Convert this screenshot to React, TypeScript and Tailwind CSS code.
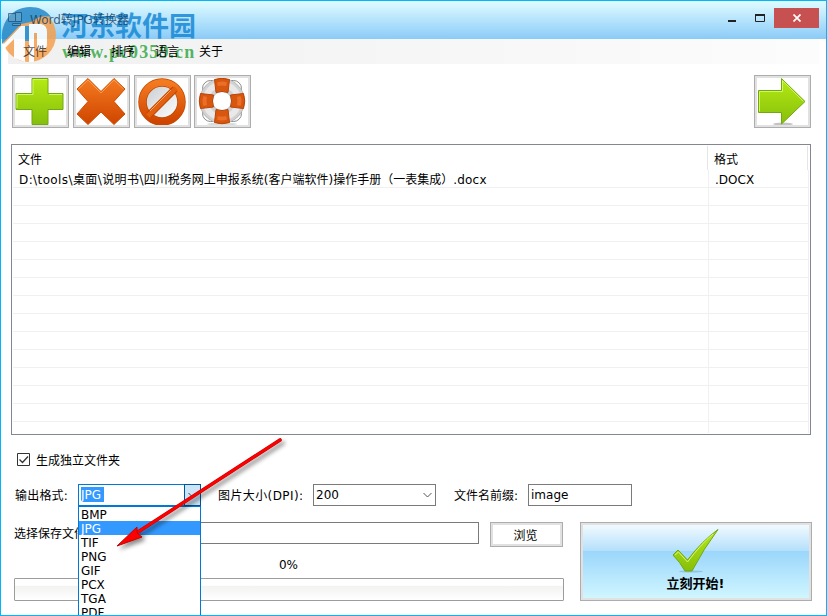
import { clsx } from "clsx";
import type { ReactNode } from "react";

const menus = ["文件", "编辑", "排序", "语言", "关于"];
const formats = ["BMP", "JPG", "TIF", "PNG", "GIF", "PCX", "TGA", "PDF"];
const rows = Array.from({ length: 14 }, (_, i) => i);

function ToolButton({ children }: { children: ReactNode }) {
  return (
    <button className="block h-[53px] w-[57px] shrink-0 border border-[#adadad] bg-[#e1e1e1] p-[2px]">
      <svg viewBox="0 0 51 47" className="block h-[47px] w-[51px] bg-white">
        {children}
      </svg>
    </button>
  );
}

function Gradients() {
  return (
    <svg className="absolute h-0 w-0">
      <defs>
        <linearGradient id="green" x2="0" y2="1">
          <stop stopColor="#b5ea13" />
          <stop offset="1" stopColor="#86bf0c" />
        </linearGradient>
        <linearGradient id="orange" x2="0" y2="1">
          <stop stopColor="#f47a20" />
          <stop offset="1" stopColor="#cf4500" />
        </linearGradient>
        <linearGradient id="silver" x2="1" y2="1">
          <stop stopColor="#c9cdd0" />
          <stop offset="1" stopColor="#ffffff" />
        </linearGradient>
      </defs>
    </svg>
  );
}

function Lifebuoy() {
  return (
    <>
      <ellipse cx="25" cy="46" rx="15" ry="1.500" fill="#ccc" opacity=".7" />
      <rect x="5.500" y="2.500" width="39" height="41" rx="8" fill="white" stroke="#8b8b8b" />
      <circle cx="25" cy="23" r="16" fill="white" stroke="#b5b5b5" strokeWidth="13.500" />
      <circle cx="25" cy="23" r="16" fill="none" stroke="#d2d2d2" strokeWidth="12" />
      <circle cx="25" cy="23" r="16.500" fill="none" stroke="#e9e9e9" strokeWidth="6" />
      {[0, 90, 180, 270].map((angle) => (
        <g key={angle} transform={`rotate(${angle} 25 23)`}>
          <path d="M17.500 1.500Q25-1 32.500 1.500L31 14.500Q25 12.500 19 14.500Z" fill="#d9560f" stroke="#b84507" />
          <path d="M20 4.500Q25 2.500 30 4.500L29 8Q25 7 21 8Z" fill="#ea7029" />
        </g>
      ))}
    </>
  );
}

function Watermark() {
  return (
    <div className="pointer-events-none absolute left-0 top-0 h-[66px] w-[205px]">
      <svg viewBox="0 0 60 66" className="absolute left-0 top-0 h-[66px] w-[60px]">
        <g opacity=".85">
          <circle cx="28" cy="34" r="27" fill="#f5a04e" />
          <path d="M1 38C0 20 12 6 29 6C38 6 45 9 50 16C42 14 36 16 30 21L20 23L1 43Z" fill="#2789c8" />
          <path d="M1 45L20 25H24V61L13 57V38L3 48Z" fill="#fff" />
          <path d="M28 23H40Q46 24 46 31V44Q46 48 40 49H36V32H33V61H28Z" fill="#fff" />
          <path d="M24 25H28V40H24Z" fill="#2789c8" />
        </g>
      </svg>
      <div className="absolute left-[60px] top-[6px] whitespace-nowrap font-['Noto_Sans_CJK_SC',sans-serif] text-[27px] font-bold leading-[36px] text-[#1688d4]/85">
        河东软件园
      </div>
      <div className="absolute left-[61px] top-[41px] whitespace-nowrap font-['Liberation_Serif',serif] text-[18px] font-bold leading-[20px] tracking-[1.1px] text-[#35a947]/85">
        www.pc0359.cn
      </div>
    </div>
  );
}

function TitleBar() {
  return (
    <header className="flex h-[38px] shrink-0 bg-linear-to-b from-[#dffcff] to-[#8bcbf8] px-[7px]">
      <svg viewBox="0 0 16 16" className="relative z-10 mt-[10px] h-4 w-4 opacity-70">
        <path d="M.5 2.500h7v8h-7zM7.500 1.500h6v9h-6zM4.500 12.500h8v2h-8z" fill="#66a7cb" stroke="#1f4a72" />
      </svg>
      <span className="relative z-10 ml-[6px] mt-[9px] text-[12px] leading-[20px] text-[#173c5a]/80">
        Word转JPG转换器
      </span>
      <div className="ml-auto mt-[7px] flex h-[20px]">
        <svg viewBox="0 0 46 20" className="h-[20px] w-[46px]">
          <path d="M0 12h8v2H0z" fill="#222" />
          <path d="M27.500 7.500h9v6h-9z" fill="none" stroke="#222" />
          <path d="M27 6h10v2H27z" fill="#222" />
        </svg>
        <button className="flex h-[20px] w-[45px] items-center justify-center bg-[#c75050]">
          <svg viewBox="0 0 8 8" className="h-[8px] w-[8px]">
            <path d="M.5.5l7 7m0-7l-7 7" stroke="#fff" strokeWidth="1.700" />
          </svg>
        </button>
      </div>
    </header>
  );
}

function FileList() {
  return (
    <div className="ml-[10px] mt-[16px] h-[291px] w-[800px] shrink-0 border border-[#828790] bg-white p-px leading-[18px]">
      <div className="flex h-[24px] w-[795px] border-r border-[#e5e5e5]">
        <span className="h-[24px] w-[695px] border-r border-[#e5e5e5] pl-[5px] pt-[5px]">文件</span>
        <span className="pl-[6px] pt-[5px]">格式</span>
      </div>
      <div className="w-[796px] border-r border-[#f0f0f0]">
        {rows.map((i) => (
          <div key={i} className="flex h-[18px] border-b border-[#f0f0f0] leading-[20px]">
            <span className="w-[696px] whitespace-pre border-r border-[#f0f0f0] pl-[6px]">
              {i === 0 && (
                <>
                  <span className="tracking-[0.4px]">{"D:\\tools\\桌面\\说明书\\"}</span>
                  四川税务网上申报系统(客户端软件)操作手册（一表集成）
                  <span className="tracking-[0.2px]">.docx</span>
                </>
              )}
            </span>
            <span className="pl-[6px]">{i === 0 && ".DOCX"}</span>
          </div>
        ))}
        <div className="h-[11px] w-[696px] border-r border-[#f0f0f0]" />
      </div>
    </div>
  );
}

function FormatSelect() {
  return (
    <div className="relative h-[22px] w-[123px]">
      <div className="flex h-[22px] border border-[#0078d7] bg-white">
        <span className="ml-[2px] mt-[2px] h-[15px] w-[23px] bg-[#3399ff] leading-[16px] text-white">JPG</span>
        <div className="-my-px -mr-px ml-auto flex w-[17px] items-center justify-center border border-[#005499] bg-[#cce4f7]">
          <svg viewBox="0 0 9 6" className="h-[6px] w-[9px]">
            <path d="M.5 1l4 4 4-4" fill="none" stroke="#444" />
          </svg>
        </div>
      </div>
      <ul className="absolute left-0 top-[22px] z-10 h-[110px] w-[123px] overflow-hidden border border-b-0 border-[#0078d7] bg-white">
        {formats.map((format) => (
          <li
            key={format}
            className={clsx("h-[14px] pl-[2px] leading-[16px]", format === "JPG" && "bg-[#3399ff] text-white")}
          >
            {format}
          </li>
        ))}
      </ul>
    </div>
  );
}

function Options() {
  return (
    <div className="flex h-[22px] shrink-0 leading-[24px]">
      <span className="w-[77px] pl-[14px] tracking-[0.2px]">输出格式:</span>
      <FormatSelect />
      <span className="ml-[17px] w-[95px] whitespace-nowrap tracking-[0.4px]">图片大小(DPI):</span>
      <div className="flex h-[22px] w-[123px] items-center border border-[#7a7a7a] pl-[2px] pr-[3px]">
        200
        <svg viewBox="0 0 9 6" className="ml-auto h-[6px] w-[9px]">
          <path d="M.5 1l4 4 4-4" fill="none" stroke="#555" />
        </svg>
      </div>
      <span className="ml-[18px] w-[74px] whitespace-nowrap">文件名前缀:</span>
      <div className="h-[22px] w-[104px] border border-[#7a7a7a] pl-[2px] leading-[21px]">image</div>
    </div>
  );
}

function Output() {
  return (
    <div className="mt-[16px] flex h-[79px] shrink-0">
      <div className="w-[579px] pl-[13px]">
        <div className="flex">
          <span className="w-[90px] whitespace-nowrap leading-[24px]">选择保存文件夹:</span>
          <div className="h-[22px] w-[375px] border border-[#7a7a7a]" />
          <button className="ml-[11px] h-[25px] w-[73px] border border-[#adadad] bg-[#e1e1e1] p-[2px]">
            <span className="block h-full bg-white pr-[2px] leading-[22px]">浏览</span>
          </button>
        </div>
        <div className="mt-[9px] w-[549px] text-center leading-[18px]">0%</div>
        <div className="mt-[4px] h-[23px] w-[550px] rounded-[1px] border border-[#9c9c9c] bg-linear-to-b from-white from-30% via-[#f3f3f2] via-35% to-white" />
      </div>
      <button className="h-[79px] w-[232px] border border-[#adadad] bg-[#e1e1e1] p-[2px]">
        <div className="flex h-full flex-col items-center bg-[linear-gradient(#f1faff_0%,#b5e0fb_35%,#9bd6fb_36%,#d0f6ff_100%)]">
          <svg viewBox="0 0 48 45" className="mt-[3px] h-[45px] w-[48px] shrink-0">
            <ellipse cx="19" cy="43.500" rx="12" ry="1" fill="#67a8ca" opacity=".5" />
            <path d="M1 27L6 22L15.500 32Q30 13 46 1.500Q32 20 20 43H13Q8 34 1 27Z" fill="url(#green)" stroke="#72a60c" />
            <path d="M3 27L6.500 24L15.500 34Q29 16 41 6" fill="none" stroke="#d8f778" />
          </svg>
          <span className="-ml-px mt-[2px] text-[13px] font-bold leading-[18px]">立刻开始!</span>
        </div>
      </button>
    </div>
  );
}

export default function App() {
  return (
    <main className="relative flex h-[616px] w-[827px] flex-col overflow-hidden border border-[#00b7ff] bg-white font-['DejaVu_Sans','Noto_Sans_CJK_SC',sans-serif] text-[12px] leading-[18px] text-black">
      <Gradients />
      <TitleBar />
      <nav className="ml-[7px] flex h-[25px] w-[811px] shrink-0 bg-linear-to-r from-[#f0f0f0] to-[#fcfcfc] pl-[15px]">
        {menus.map((menu) => (
          <span key={menu} className="relative z-10 w-[44px] leading-[27px] first:text-black/70">
            {menu}
          </span>
        ))}
      </nav>
      <div className="mt-[11px] flex h-[53px] shrink-0 gap-[4px] pl-[11px] pr-[15px]">
        <ToolButton>
          <path d="M17 .5h16v15h15v16H33v15H17v-15H1v-16h16z" fill="url(#green)" stroke="#72a811" />
          <path d="M2 30V16.500h16V1.500h14M34 16.500h13" fill="none" stroke="#d1f568" />
        </ToolButton>
        <ToolButton>
          <path d="M1 11L12 .5L25 13.500L38 .5L49 11L38 23.500L49 36L38 46.500L25 34L12 46.500L1 36L12 23.500Z" fill="url(#orange)" stroke="#c94e06" />
          <path d="M2.500 11L12 2L25 15L38 2L47.500 11" fill="none" stroke="#ff9b4c" />
        </ToolButton>
        <ToolButton>
          <circle cx="25" cy="24" r="17" fill="url(#silver)" />
          <circle cx="25" cy="24" r="19.500" fill="none" stroke="#be4800" strokeWidth="8.500" />
          <circle cx="25" cy="24" r="19.500" fill="none" stroke="url(#orange)" strokeWidth="7" />
          <path d="M12 37L38 11" stroke="#be4800" strokeWidth="7" />
          <path d="M11 38L39 10" stroke="#e2600f" strokeWidth="5" />
          <path d="M13 33L34 12" stroke="#ffa564" />
        </ToolButton>
        <div className="-ml-px">
          <ToolButton>
            <Lifebuoy />
          </ToolButton>
        </div>
        <div className="ml-auto">
          <ToolButton>
            <ellipse cx="26" cy="46" rx="10" ry="1.500" fill="#aaa" opacity=".7" />
            <path d="M1.500 12.500h23V.5L48 23.500L24.500 46V34.500h-23z" fill="url(#green)" stroke="#6fa90d" />
            <path d="M2.500 33.500v-20h23V2.500L46.500 23.500" fill="none" stroke="#d1f568" />
          </ToolButton>
        </div>
      </div>
      <FileList />
      <label className="mt-[16px] flex h-[18px] shrink-0 items-start pl-[16px] leading-[20px]">
        <svg viewBox="0 0 13 13" className="mr-[6px] mt-[2px] h-[13px] w-[13px]">
          <path d="M.5.5h12v12H.5z" fill="white" stroke="#333" />
          <path d="M2.500 6.500l3 3L11 3.500" fill="none" stroke="#333" strokeWidth="1.300" />
        </svg>
        生成独立文件夹
      </label>
      <div className="h-[15px] shrink-0" />
      <Options />
      <Output />
      <Watermark />
      {/* Callout pointing at the format list */}
      <svg
        viewBox="0 0 180 125"
        className="pointer-events-none absolute left-[108px] top-[431px] z-20 h-[125px] w-[180px] drop-shadow-[3px_3px_2px_rgba(0,0,0,0.45)]"
      >
        <path d="M171 8L29 100" stroke="#c40000" strokeWidth="3.600" strokeLinecap="round" />
        <path d="M171 8L29 100" stroke="#f00" strokeWidth="2.600" strokeLinecap="round" />
        <path d="M8 114L28 95L28 101L33 105Z" fill="#f00" stroke="#c40000" />
      </svg>
    </main>
  );
}
